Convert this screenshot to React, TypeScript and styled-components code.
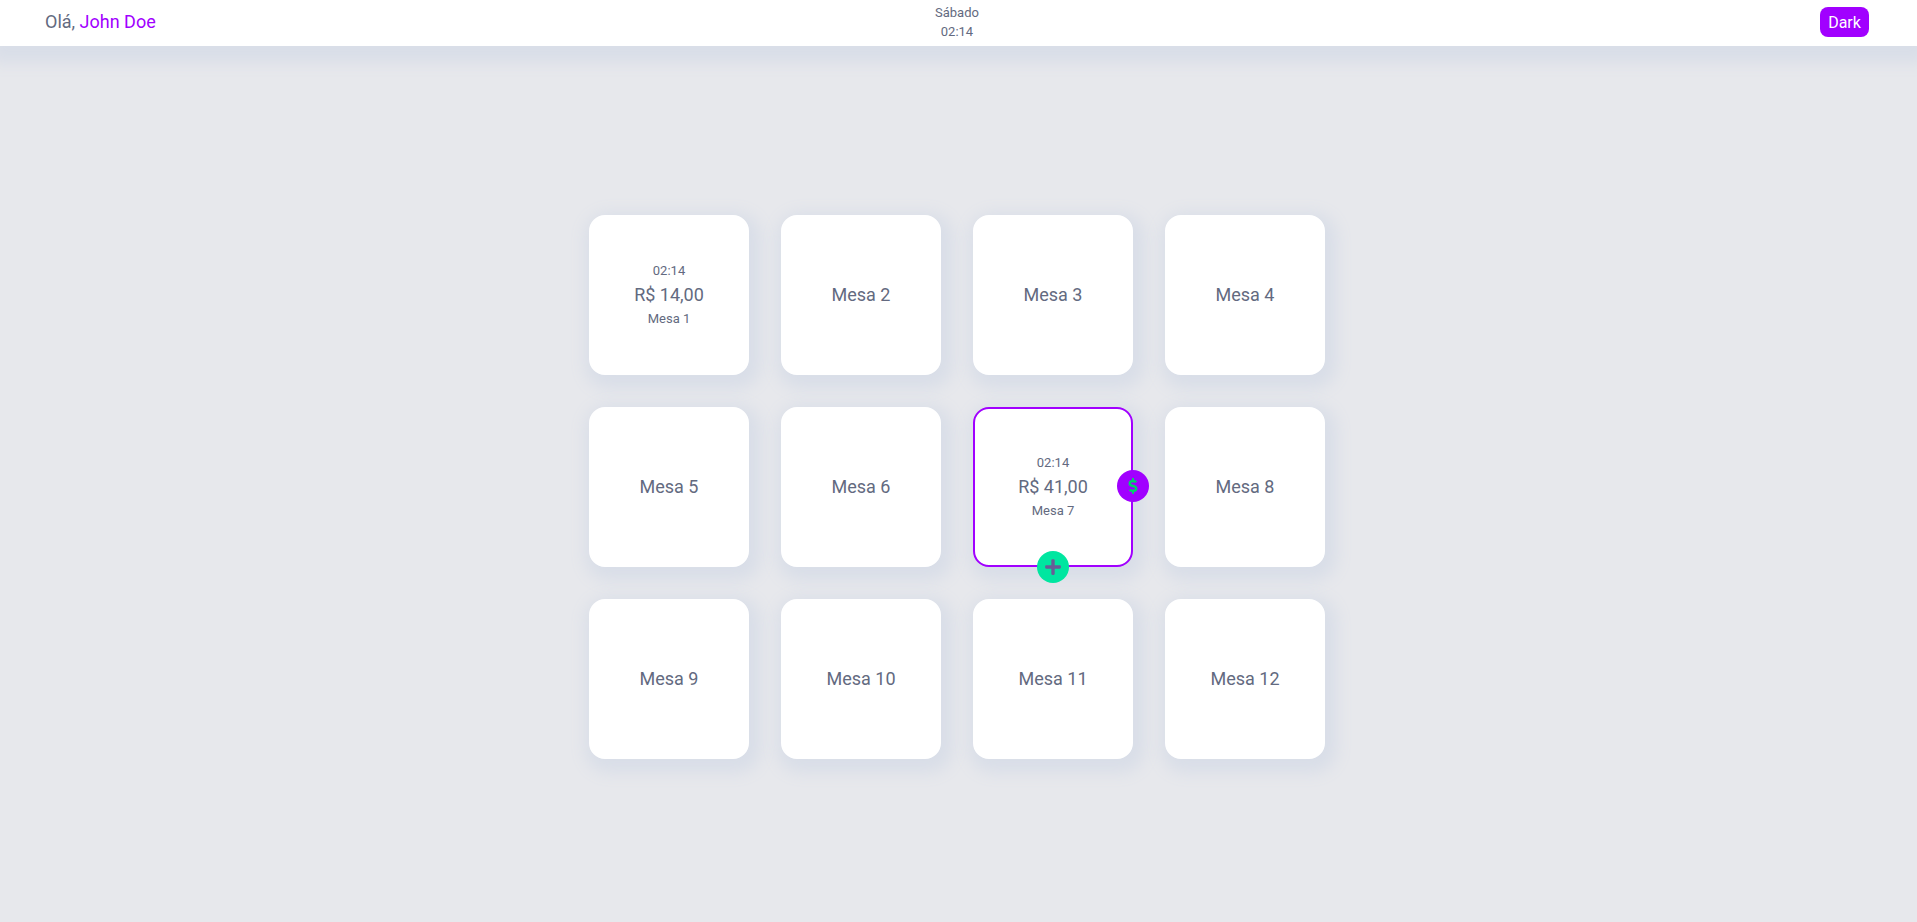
import React from "react";
import styled, { createGlobalStyle } from "styled-components";
import { FaDollarSign, FaPlus } from "react-icons/fa";

const colors = {
  primary: "#a100ff",
  accent: "#00e6a0",
  text: "#636a80",
  background: "#e7e8ec",
  surface: "#ffffff",
  shadow: "#d9dee8",
};

const GlobalStyle = createGlobalStyle`
  * { box-sizing: border-box; margin: 0; padding: 0; }
  body {
    background: ${colors.background};
    color: ${colors.text};
    font-family: Roboto, "Liberation Sans", sans-serif;
    font-size: 18px;
    overflow: hidden;
  }
  button { font: inherit; border: 0; cursor: pointer; }
`;

const Page = styled.div`
  display: flex;
  flex-direction: column;
  height: 100vh;
`;

const Header = styled.header`
  display: grid;
  grid-template-columns: 1fr auto 1fr;
  align-items: center;
  height: 46px;
  padding: 0 48px 0 45px;
  background: ${colors.surface};
  box-shadow: 0 8px 14px 9px ${colors.shadow};
`;

const Greeting = styled.p`
  line-height: 22px;
  padding-bottom: 3px;
  strong { font-weight: 400; color: ${colors.primary}; }
`;

const Clock = styled.div`
  display: flex;
  flex-direction: column;
  align-items: center;
  font-size: 13px;
  line-height: 19px;
  padding-bottom: 2px;
`;

const ThemeButton = styled.button`
  justify-self: end;
  width: 49px;
  height: 30px;
  margin-bottom: 2px;
  border-radius: 8px;
  background: ${colors.primary};
  color: #fff;
  font-size: 16px;
`;

const Main = styled.main`
  flex: 1;
  display: flex;
  align-items: center;
  justify-content: center;
  padding: 6px 3px 0 0;
`;

const Tables = styled.section`
  display: grid;
  grid-template-columns: repeat(4, 160px);
  grid-auto-rows: 160px;
  gap: 32px;
`;

const Card = styled.article<{ $selected?: boolean }>`
  position: relative;
  display: flex;
  flex-direction: column;
  align-items: center;
  justify-content: center;
  border: 2px solid ${(p) => (p.$selected ? colors.primary : colors.surface)};
  border-radius: 16px;
  background: ${colors.surface};
  box-shadow: 4px 6px 16px 8px ${colors.shadow};
`;

const Title = styled.span`
  line-height: 24px;
`;

const Small = styled.span`
  font-size: 13px;
  line-height: 24px;
`;

const RoundButton = styled.button<{ $side: "right" | "bottom" }>`
  position: absolute;
  z-index: 1;
  display: flex;
  align-items: center;
  justify-content: center;
  width: 32px;
  height: 32px;
  border-radius: 50%;
  font-size: ${(p) => (p.$side === "right" ? "16px" : "18px")};
  ${(p) =>
    p.$side === "right"
      ? `right: -18px; top: 61px; background: ${colors.primary}; color: #00d269;`
      : `bottom: -18px; left: 62px; background: ${colors.accent}; color: #6a5c96;`}
`;

type Table = { id: number; total?: string; selected?: boolean };

const tables: Table[] = Array.from({ length: 12 }, (_, i) => {
  const id = i + 1;
  if (id === 1) return { id, total: "R$ 14,00" };
  if (id === 7) return { id, total: "R$ 41,00", selected: true };
  return { id };
});

export default function App() {
  return (
    <>
      <GlobalStyle />
      <Page>
        <Header>
          <Greeting>
            Olá, <strong>John Doe</strong>
          </Greeting>
          <Clock>
            <span>Sábado</span>
            <span>02:14</span>
          </Clock>
          <ThemeButton>Dark</ThemeButton>
        </Header>
        <Main>
          <Tables>
            {tables.map(({ id, total, selected }) => (
              <Card key={id} $selected={selected}>
                {total ? (
                  <>
                    <Small>02:14</Small>
                    <Title>{total}</Title>
                    <Small>Mesa {id}</Small>
                  </>
                ) : (
                  <Title>Mesa {id}</Title>
                )}
                {selected && (
                  <>
                    <RoundButton $side="right" aria-label="Pagar">
                      <FaDollarSign />
                    </RoundButton>
                    <RoundButton $side="bottom" aria-label="Adicionar">
                      <FaPlus />
                    </RoundButton>
                  </>
                )}
              </Card>
            ))}
          </Tables>
        </Main>
      </Page>
    </>
  );
}
